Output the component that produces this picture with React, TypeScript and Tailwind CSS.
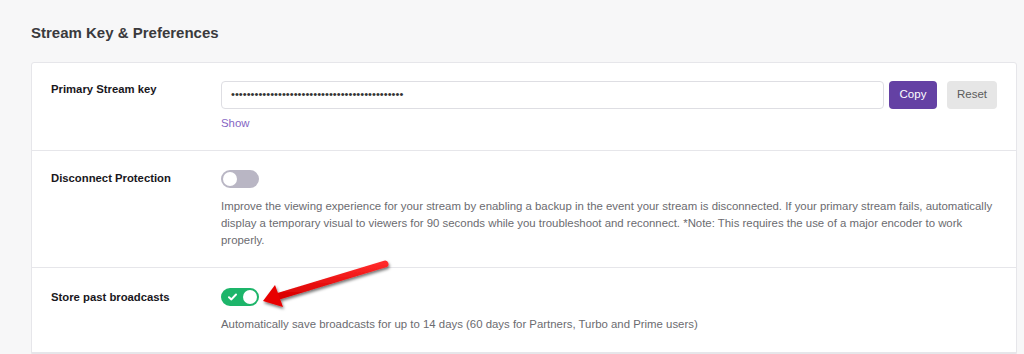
import React from "react";

function Toggle({ on }: { on: boolean }) {
  return (
    <div
      className={
        on
          ? "relative flex h-[18px] w-[38px] items-center rounded-full bg-[#1db56a] px-[2px] justify-end"
          : "relative flex h-[18px] w-[38px] items-center rounded-full bg-[#b9b6c4] px-[2px]"
      }
    >
      {on && (
        <svg className="absolute left-[7px] top-[5px]" width="9" height="8" viewBox="0 0 9 8">
          <path d="M1 4.2 L3.4 6.4 L8 1.5" stroke="white" strokeWidth="2" fill="none" strokeLinecap="round" strokeLinejoin="round" />
        </svg>
      )}
      <div className="h-[14px] w-[14px] rounded-full bg-white" />
    </div>
  );
}

export default function App() {
  return (
    <div
      className="relative h-[354px] w-[1024px] overflow-hidden bg-[#f7f7f8] text-[#19171c]"
      style={{ fontFamily: '"Liberation Sans", Arial, sans-serif' }}
    >
      <div className="pl-[31px] pr-[7px] pt-[24px]">
        <h2 className="text-[15px] font-bold leading-[18px] text-[#3a3a3d]">Stream Key &amp; Preferences</h2>
        <div className="mt-[20px] rounded-t-[3px] border border-[#e6e6ea] bg-white">
          {/* Row 1 */}
          <div className="flex border-b border-[#e6e6ea] pl-[19px] pr-[19px] pt-[18px] pb-[20px]">
            <div className="w-[170px] shrink-0 pt-0 text-[11.3px] font-bold leading-[16px]">Primary Stream key</div>
            <div className="flex-1">
              <div className="flex items-center">
                <div className="flex h-[28px] flex-1 items-center rounded-[4px] border border-[#dedee3] bg-white px-[9px] text-[11.2px] leading-none text-[#333]">
                  ••••••••••••••••••••••••••••••••••••••••••••
                </div>
                <button className="ml-[5px] h-[28px] w-[48px] rounded-[4px] bg-[#6441a4] text-[11.5px] text-white">Copy</button>
                <button className="ml-[10px] h-[28px] w-[50px] rounded-[4px] bg-[#e6e6e6] text-[11.5px] text-[#5c5c5c]">Reset</button>
              </div>
              <div className="mt-[7px] text-[11.4px] leading-[14px] text-[#8565c4]">Show</div>
            </div>
          </div>
          {/* Row 2 */}
          <div className="flex border-b border-[#e6e6ea] pl-[19px] pr-[19px] pt-[19px] pb-[18px]">
            <div className="w-[170px] shrink-0 pt-0 text-[11.3px] font-bold leading-[16px]">Disconnect Protection</div>
            <div className="flex-1">
              <Toggle on={false} />
              <p className="mt-[10px] text-[11.4px] leading-[17px] text-[#6b6b70]">
                Improve the viewing experience for your stream by enabling a backup in the event your stream is disconnected. If your primary stream fails, automatically display a temporary visual to viewers for 90 seconds while you troubleshoot and reconnect. *Note: This requires the use of a major encoder to work properly.
              </p>
            </div>
          </div>
          {/* Row 3 */}
          <div className="flex border-b border-[#e6e6ea] pl-[19px] pr-[19px] pt-[20px] pb-[19px]">
            <div className="w-[170px] shrink-0 pt-[1px] text-[11.3px] font-bold leading-[16px]">Store past broadcasts</div>
            <div className="flex-1">
              <Toggle on={true} />
              <p className="mt-[10px] text-[11.4px] leading-[17px] text-[#6b6b70]">
                Automatically save broadcasts for up to 14 days (60 days for Partners, Turbo and Prime users)
              </p>
            </div>
          </div>
        </div>
      </div>
      {/* red arrow annotation */}
      <svg className="pointer-events-none absolute left-0 top-0" width="1024" height="354" viewBox="0 0 1024 354">
        <defs>
          <filter id="sh" x="-20%" y="-50%" width="140%" height="200%">
            <feDropShadow dx="1" dy="2" stdDeviation="1.5" floodColor="#000" floodOpacity="0.55" />
          </filter>
          <linearGradient id="rg" x1="0" y1="0" x2="0" y2="1">
            <stop offset="0" stopColor="#ff2a2a" />
            <stop offset="1" stopColor="#d90000" />
          </linearGradient>
        </defs>
        <g filter="url(#sh)">
          <line x1="385" y1="264" x2="276" y2="297" stroke="url(#rg)" strokeWidth="7" strokeLinecap="round" />
          <polygon points="263,301 275,285 283,307" fill="#e80000" />
        </g>
      </svg>
    </div>
  );
}
